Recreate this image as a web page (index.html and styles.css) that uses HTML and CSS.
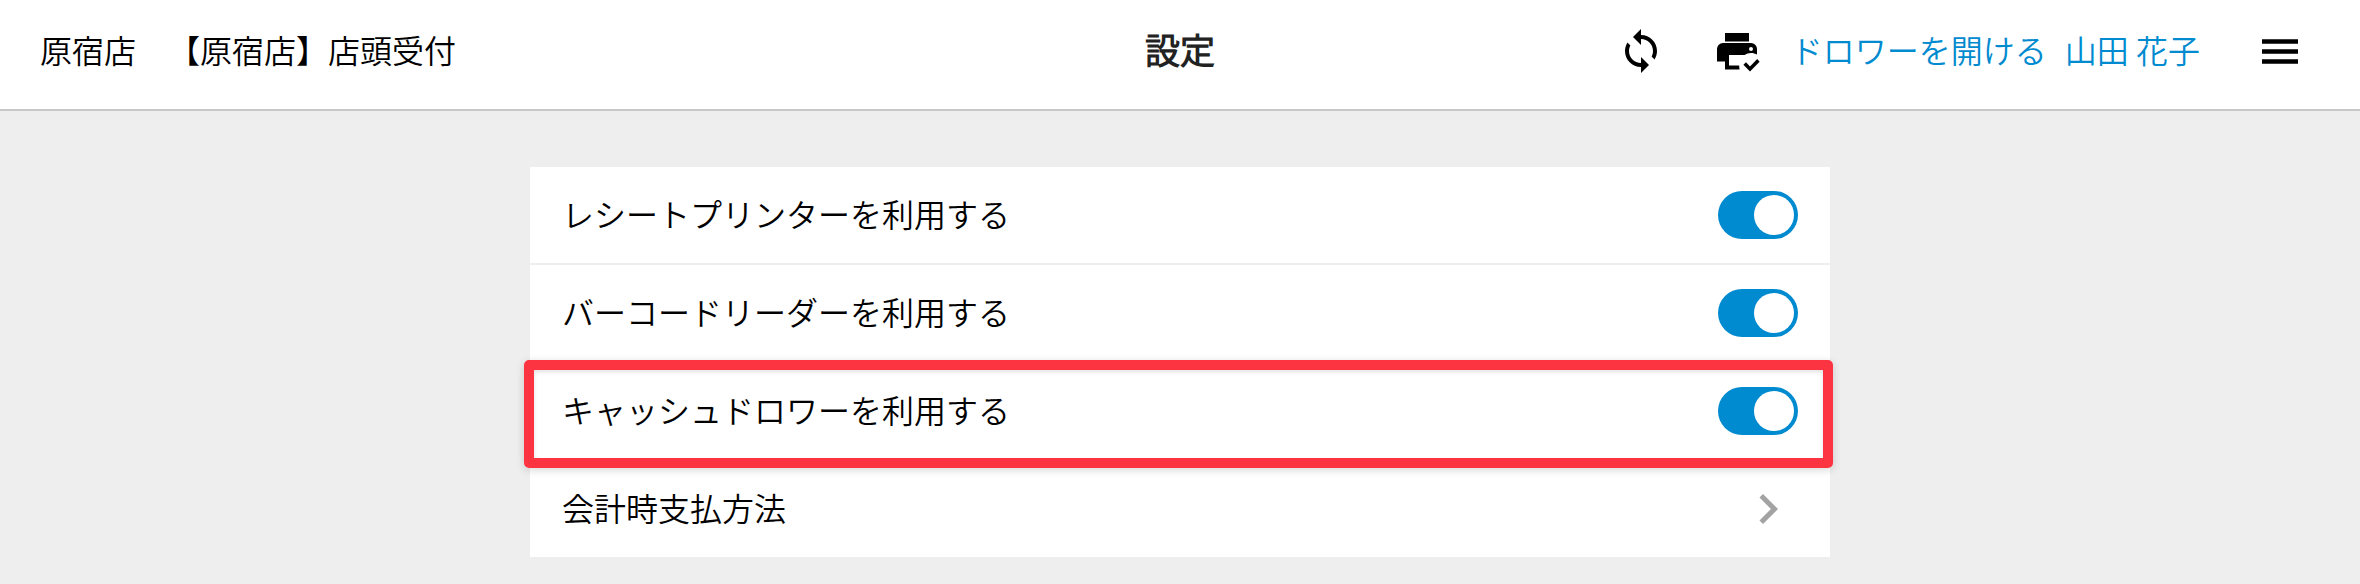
FILE: index.html
```html
<!DOCTYPE html>
<html lang="ja">
<head>
<meta charset="utf-8">
<meta name="viewport" content="width=device-width, initial-scale=1">
<title>設定</title>
<link rel="stylesheet" href="styles.css">
</head>
<body>
<header class="topbar">
  <div class="shop">
    <span>原宿店</span>
    <span>【原宿店】店頭受付</span>
  </div>
  <h1 class="title">設定</h1>
  <div class="actions">
    <div class="tools">
      <button class="icon-button" type="button" aria-label="同期">
        <svg class="icon" viewBox="0 0 24 24"><path d="M12 4V1L8 5l4 4V6c3.310 0 6 2.690 6 6 0 1.010-.25 1.970-.7 2.800l1.460 1.460C19.540 15.030 20 13.570 20 12c0-4.420-3.580-8-8-8zm0 14c-3.310 0-6-2.690-6-6 0-1.010.25-1.970.7-2.800L5.240 7.740C4.460 8.970 4 10.430 4 12c0 4.420 3.580 8 8 8v3l4-4-4-4v3z"/></svg>
      </button>
      <button class="icon-button" type="button" aria-label="プリンター">
        <svg class="icon" viewBox="0 0 24 24"><path fill-rule="evenodd" d="M6 3h12v4.200H6zM5 8h14a3 3 0 0 1 3 3v2.800C21.100 13.300 20.100 13 19 13c-1.200 0-2.300.4-3.200 1H8v5.200h5.100c0 .7 0 1.300.2 2H6v-4H2V11a3 3 0 0 1 3-3zM19 10a1 1 0 1 0 0 2 1 1 0 0 0 0-2zM18.500 22.300 15.200 18.900 16.500 17.600 18.500 19.700 22.100 16 23.300 17.400z"/></svg>
      </button>
    </div>
    <nav class="links">
      <a class="link" href="#">ドロワーを開ける</a>
      <a class="link" href="#">山田 花子</a>
    </nav>
    <button class="icon-button" type="button" aria-label="メニュー">
      <svg class="icon" viewBox="0 0 48 48"><path d="M6 12.300h36v4.400H6zM6 22.300h36v4.400H6zM6 32.300h36v4.400H6z"/></svg>
    </button>
  </div>
</header>
<main class="page">
  <div class="settings">
    <div class="row">
      <label class="name" for="receipt">レシートプリンターを利用する</label>
      <input class="switch" id="receipt" type="checkbox" role="switch" checked>
    </div>
    <div class="row">
      <label class="name" for="barcode">バーコードリーダーを利用する</label>
      <input class="switch" id="barcode" type="checkbox" role="switch" checked>
    </div>
    <div class="row highlighted">
      <label class="name" for="drawer">キャッシュドロワーを利用する</label>
      <input class="switch" id="drawer" type="checkbox" role="switch" checked>
    </div>
    <a class="row" href="#">
      <span class="name">会計時支払方法</span>
      <svg class="chevron" viewBox="0 0 24 24"><path d="M10 6 8.590 7.410 13.170 12l-4.580 4.590L10 18l6-6z"/></svg>
    </a>
  </div>
</main>
</body>
</html>
```
FILE: styles.css
```css
* {
  box-sizing: border-box;
}

body {
  margin: 0;
  background: #eeeeee;
  color: #000000;
  font-family: "Noto Sans CJK JP DemiLight", "Noto Sans CJK JP", sans-serif;
  font-size: 32px;
  font-weight: 350;
  line-height: 48px;
}

.topbar {
  display: grid;
  grid-template-columns: 1fr auto 1fr;
  align-items: center;
  padding: 25px 56px 32px 40px;
  background: #ffffff;
  border-bottom: 2px solid #c8c8c8;
}

.shop {
  display: flex;
  gap: 32px;
  white-space: nowrap;
}

.shop,
.title,
.links,
.name {
  padding-bottom: 4px;
}

.title {
  margin: 0 0 0 16px;
  font-size: 35px;
  font-weight: 700;
  line-height: 48px;
  color: #222222;
}

.actions,
.tools,
.links {
  display: flex;
  align-items: center;
  white-space: nowrap;
}

.actions {
  justify-content: flex-end;
}

.tools {
  gap: 48px;
  margin-right: 30px;
}

.links {
  gap: 18px;
  margin-right: 56px;
}

.icon-button {
  display: block;
  width: 48px;
  height: 48px;
  padding: 0;
  border: 0;
  background: none;
}

.icon {
  display: block;
  width: 48px;
  height: 48px;
}

.link {
  color: #008acf;
  text-decoration: none;
}

.page {
  padding: 56px 32px 26px;
}

.settings {
  max-width: 1300px;
  margin: 0 auto;
  background: #ffffff;
}

.row {
  position: relative;
  display: flex;
  align-items: center;
  justify-content: space-between;
  height: 98px;
  padding: 0 32px;
  border-bottom: 2px solid #eeeeee;
  color: inherit;
  text-decoration: none;
}

.row:last-child {
  height: 96px;
  border-bottom: 0;
}

.highlighted::after {
  content: "";
  position: absolute;
  z-index: 1;
  inset: -3px -3px -9px -6px;
  border: 10px solid #fc3442;
  border-radius: 5px;
  box-shadow: 0 2px 8px rgba(0, 0, 0, 0.16), inset 0 2px 4px rgba(0, 0, 0, 0.12);
  pointer-events: none;
}

.switch {
  appearance: none;
  display: flex;
  align-items: center;
  width: 80px;
  height: 48px;
  margin: 0;
  padding: 4px;
  border-radius: 24px;
  background: #c8c8c8;
}

.switch::before {
  content: "";
  width: 40px;
  height: 40px;
  border-radius: 50%;
  background: #ffffff;
}

.switch:checked {
  justify-content: flex-end;
  background: #008acf;
}

.chevron {
  width: 60px;
  height: 60px;
  fill: #a3a3a3;
}
```
